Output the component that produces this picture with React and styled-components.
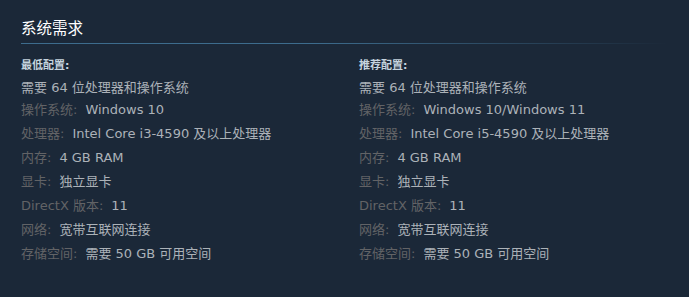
import React from 'react'
import styled, { createGlobalStyle } from 'styled-components'

const GlobalStyle = createGlobalStyle`
  html, body {
    margin: 0;
    padding: 0;
    background: #1b2838;
  }
  body {
    font-family: "DejaVu Sans", "Liberation Sans", Arial, "Noto Sans CJK SC", sans-serif;
  }
`

const specs = {
  min: {
    title: '最低配置:',
    rows: [
      { value: '需要 64 位处理器和操作系统' },
      { label: '操作系统:', value: 'Windows 10' },
      { label: '处理器:', value: 'Intel Core i3-4590 及以上处理器' },
      { label: '内存:', value: '4 GB RAM' },
      { label: '显卡:', value: '独立显卡' },
      { label: 'DirectX 版本:', value: '11' },
      { label: '网络:', value: '宽带互联网连接' },
      { label: '存储空间:', value: '需要 50 GB 可用空间' },
    ],
  },
  rec: {
    title: '推荐配置:',
    rows: [
      { value: '需要 64 位处理器和操作系统' },
      { label: '操作系统:', value: 'Windows 10/Windows 11' },
      { label: '处理器:', value: 'Intel Core i5-4590 及以上处理器' },
      { label: '内存:', value: '4 GB RAM' },
      { label: '显卡:', value: '独立显卡' },
      { label: 'DirectX 版本:', value: '11' },
      { label: '网络:', value: '宽带互联网连接' },
      { label: '存储空间:', value: '需要 50 GB 可用空间' },
    ],
  },
}

const SpecColumn = ({ title, rows }) => (
  <Column>
    <ColumnTitle>{title}</ColumnTitle>
    <List>
      {rows.map((r, idx) => (
        <Row key={idx} $first={idx === 0}>
          {r.label && <Label>{r.label}</Label>}
          <Value>{r.value}</Value>
        </Row>
      ))}
    </List>
  </Column>
)

const App = () => (
  <>
    <GlobalStyle />
    <Page>
      <Heading>系统需求</Heading>
      <Columns>
        <SpecColumn {...specs.min} />
        <SpecColumn {...specs.rec} />
      </Columns>
    </Page>
  </>
)

const Page = styled.div`
  width: 689px;
  height: 297px;
  padding: 19px 0 0 21px;
  box-sizing: border-box;
  background: #1b2838;
`

const Heading = styled.h2`
  margin: 0;
  width: 647px;
  font-size: 15.5px;
  line-height: 20px;
  font-weight: normal;
  color: #ffffff;
  padding-bottom: 5px;
  background-image: linear-gradient(to right, #3d6c8d 0%, #3d6c8d 45%, rgba(61, 108, 141, 0) 100%);
  background-size: 100% 1px;
  background-repeat: no-repeat;
  background-position: left bottom;
`

const Columns = styled.div`
  display: grid;
  grid-template-columns: 338px 1fr;
  margin-top: 14px;
`

const Column = styled.div`
  display: flex;
  flex-direction: column;
`

const ColumnTitle = styled.div`
  font-size: 11px;
  line-height: 16px;
  font-weight: bold;
  color: #c6d4df;
`

const List = styled.ul`
  list-style: none;
  margin: 5px 0 0;
  padding: 0;
`

const Row = styled.li`
  font-size: 13px;
  line-height: 18px;
  color: #acb2b8;
  margin-bottom: ${p => (p.$first ? '4px' : '6px')};
  white-space: nowrap;
`

const Label = styled.span`
  color: #626366;
  margin-right: 8px;
`

const Value = styled.span`
  color: #acb2b8;
`

export default App
